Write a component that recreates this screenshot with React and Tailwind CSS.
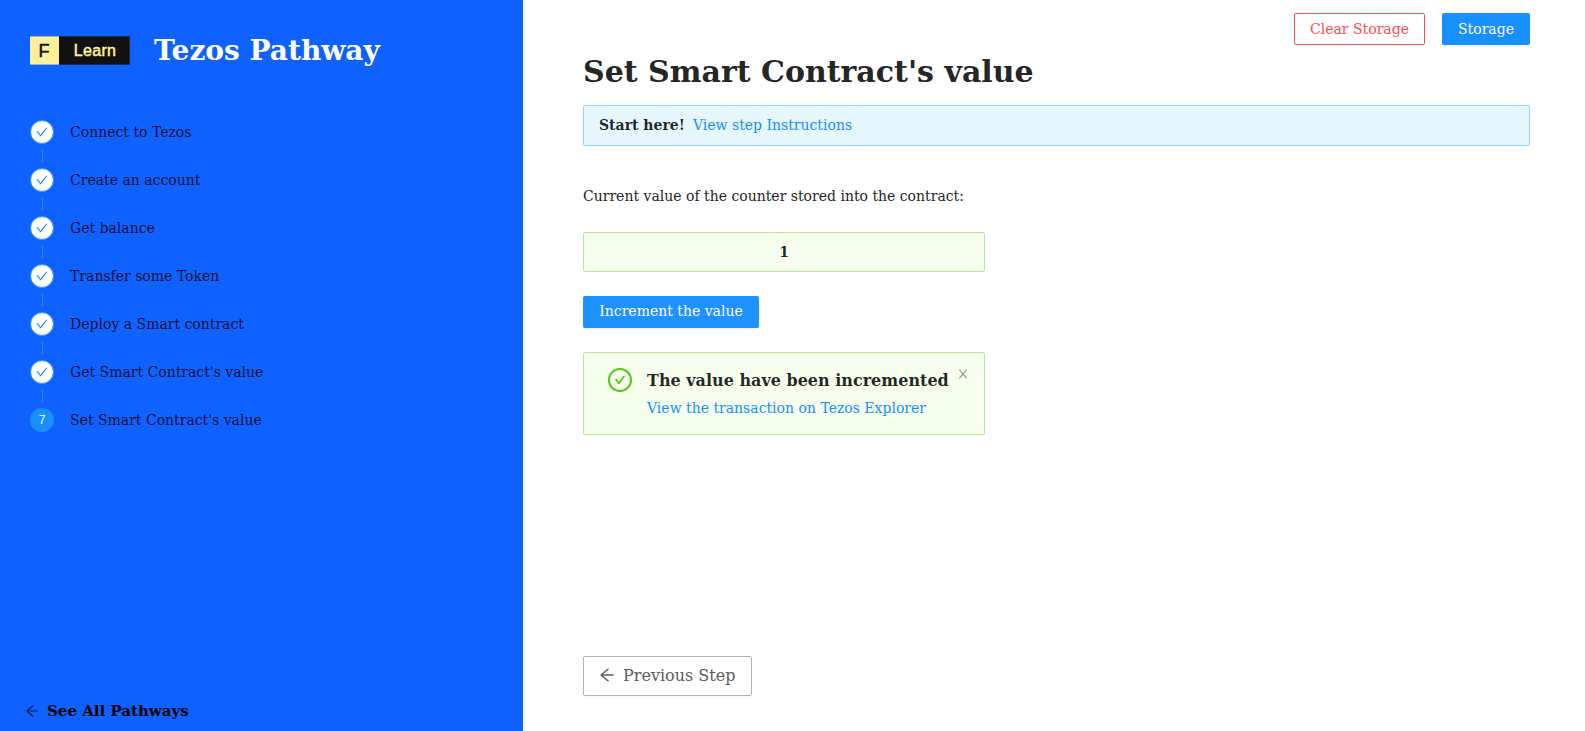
import React from 'react'
import { AiOutlineArrowLeft, AiOutlineCheck, AiOutlineCheckCircle } from 'react-icons/ai'

const STEPS = [
  'Connect to Tezos',
  'Create an account',
  'Get balance',
  'Transfer some Token',
  'Deploy a Smart contract',
  "Get Smart Contract's value",
  "Set Smart Contract's value",
]

// Trims the built-in margin of the Ant icons
const TIGHT = '64 64 896 896'

function CloseIcon() {
  return (
    <svg
      viewBox={TIGHT}
      width="12"
      height="12"
      fill="currentColor"
      className="shrink-0 text-black/45"
      aria-hidden="true"
    >
      <path d="M563.8 512l262.5-312.9c4.4-5.2.7-13.1-6.1-13.1h-79.8c-4.7 0-9.2 2.1-12.3 5.7L511.6 449.8 295.1 191.7c-3-3.6-7.5-5.7-12.3-5.7H203c-6.8 0-10.5 7.9-6.1 13.1L459.4 512 196.9 824.9A7.95 7.95 0 0 0 203 838h79.8c4.7 0 9.2-2.1 12.3-5.7l216.5-258.1 216.5 258.1c3 3.6 7.5 5.7 12.3 5.7h79.8c6.8 0 10.5-7.9 6.1-13.1L563.8 512z" />
    </svg>
  )
}

function Logo() {
  return (
    <div className="flex h-[29px] w-[100px] border border-[#1c2a50] font-['Liberation_Sans',sans-serif]">
      <div className="-my-px -ml-px w-[29px] border-y border-[#a3b3b8] bg-[#fff099] pt-px pr-px text-center text-[18px] leading-[27px] text-[#111] [-webkit-text-stroke:0.5px_#111]">
        F
      </div>
      <div className="flex-1 bg-[#111] pl-[2px] text-center text-[16px] leading-[27px] tracking-[0.3px] text-[#fff099] [-webkit-text-stroke:0.5px_#fff099]">
        Learn
      </div>
    </div>
  )
}

function Step({ index, title, active, last }) {
  return (
    <li className="flex h-12 gap-4">
      <div className="flex w-6 flex-col items-center">
        {active ? (
          <span className="flex size-6 shrink-0 items-center justify-center rounded-full bg-[#1890ff] font-['Liberation_Sans',sans-serif] text-xs text-white">
            {index}
          </span>
        ) : (
          <span className="flex size-6 shrink-0 items-center justify-center rounded-full border border-[#1890ff] bg-white text-[#1890ff]">
            <AiOutlineCheck size={12} viewBox={TIGHT} />
          </span>
        )}
        {!last && <span className="mt-1.5 ml-px h-3 w-px bg-[#1890ff]" />}
      </div>
      <span className="leading-6 text-black/85">{title}</span>
    </li>
  )
}

function Sidebar() {
  return (
    <aside className="flex w-[523px] shrink-0 flex-col bg-[#0f62ff]">
      <div className="flex h-[100px] items-center gap-6 pl-[30px]">
        <Logo />
        <h1 className="pt-[2px] text-[28px] leading-none font-bold text-white">Tezos Pathway</h1>
      </div>
      <ol className="mt-5 pl-[30px]">
        {STEPS.map((title, i) => (
          <Step
            key={title}
            index={i + 1}
            title={title}
            active={i === STEPS.length - 1}
            last={i === STEPS.length - 1}
          />
        ))}
      </ol>
      <a className="mt-auto mb-[9px] flex items-center gap-2 pl-[25px] text-[15px] leading-[22px] font-bold text-black">
        <AiOutlineArrowLeft size={14} viewBox={TIGHT} className="text-black/70" />
        See All Pathways
      </a>
    </aside>
  )
}

function Main() {
  return (
    <main className="flex flex-1 flex-col pt-[13px] pr-[55px] pl-[60px]">
      <div className="flex justify-end gap-[17px]">
        <button className="h-8 w-[131px] rounded-[2px] border border-[#ff4d4f] text-[#ff4d4f]">
          Clear Storage
        </button>
        <button className="h-8 w-[88px] rounded-[2px] bg-[#1890ff] text-white shadow-[0_2px_0_rgba(0,0,0,0.045)]">
          Storage
        </button>
      </div>
      <h2 className="mt-2 h-[38px] text-[30px] leading-[38px] font-bold text-[#262626]">
        Set Smart Contract&apos;s value
      </h2>
      <div className="mt-[14px] h-[41px] rounded-[2px] border border-[#91d5ff] bg-[#e6f7ff] px-[15px] pt-2 leading-[22px] text-black/85">
        <strong>Start here!</strong>
        <a className="ml-2 text-[#1890ff]">View step Instructions</a>
      </div>
      <p className="mt-[39px] leading-[22px] text-[#262626]">
        Current value of the counter stored into the contract:
      </p>
      <div className="mt-[25px] h-10 w-[402px] rounded-[2px] border border-[#b7eb8f] bg-[#f6ffed] text-center leading-[38px] font-bold text-black/85">
        1
      </div>
      <button className="mt-6 h-8 w-44 shrink-0 rounded-[2px] bg-[#1e92ff] pb-[2px] text-white shadow-[0_2px_0_rgba(0,0,0,0.045)]">
        Increment the value
      </button>
      <div className="mt-6 flex h-[83px] w-[402px] rounded-[2px] border border-[#b7eb8f] bg-[#f6ffed] pt-[15px] pr-[15px] pl-6">
        <AiOutlineCheckCircle size={24} viewBox={TIGHT} className="shrink-0 text-[#52c41a]" />
        <div className="ml-[15px] flex-1 pt-px">
          <div className="text-[16px] leading-6 font-bold whitespace-nowrap text-black/85">
            The value have been incremented
          </div>
          <a className="mt-1 block leading-[22px] text-[#1890ff]">
            View the transaction on Tezos Explorer
          </a>
        </div>
        <CloseIcon />
      </div>
      <button className="mt-auto mb-[35px] flex h-10 w-[169px] items-center gap-2 rounded-[2px] border border-[#b4b4b4] pl-[15px] text-[16px] text-[#5c5c5c] shadow-[0_2px_0_rgba(0,0,0,0.015)]">
        <AiOutlineArrowLeft size={16} viewBox={TIGHT} className="mb-[2px]" />
        Previous Step
      </button>
    </main>
  )
}

export default function App() {
  return (
    <div className="flex h-screen w-full overflow-hidden bg-white font-['DejaVu_Serif',serif] text-sm">
      <Sidebar />
      <Main />
    </div>
  )
}
